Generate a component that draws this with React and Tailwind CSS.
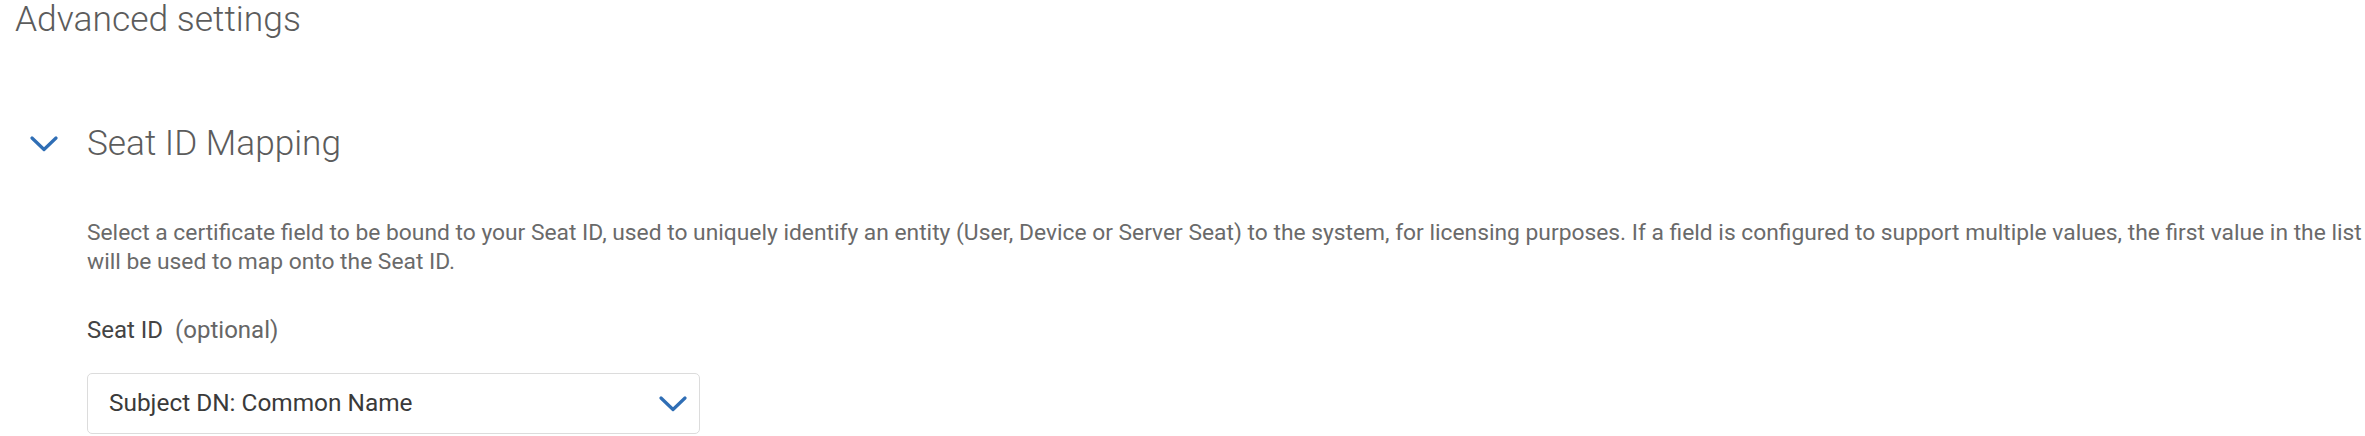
import React from 'react';

function Chevron({ className }) {
  return (
    <svg viewBox="0 0 28 16" className={className} fill="none">
      <polyline points="2,2 14,13.5 26,2" stroke="#2f6eb5" strokeWidth="3.2" strokeLinecap="round" strokeLinejoin="round" />
    </svg>
  );
}

export default function App() {
  return (
    <div className="min-h-screen bg-white font-['Roboto',sans-serif]">
      <h2 className="pl-[15px] pt-[2px] text-[35.4px] leading-[35px] font-light text-[#5c5c5c]">Advanced settings</h2>

      <section className="mt-[89px]">
        <button className="flex items-center">
          <Chevron className="ml-[30px] w-[28px] h-[16px]" />
          <span className="ml-[29px] text-[35.2px] leading-[35px] font-light text-[#5c5c5c]">Seat ID Mapping</span>
        </button>

        <div className="pl-[87px] mt-[57px]">
          <p className="text-[22.8px] leading-[29px] text-[#6a6a6a]">
            Select a certificate field to be bound to your Seat ID, used to uniquely identify an entity (User, Device or Server Seat) to the system, for licensing purposes. If a field is configured to support multiple values, the first value in the list
            <br />
            will be used to map onto the Seat ID.
          </p>

          <label className="block mt-[41px] text-[24px] leading-[27px] text-[#444]">
            Seat ID <span className="ml-[6px] text-[#666]">(optional)</span>
          </label>

          <div className="mt-[29px] w-[613px] h-[61px] border border-[#dcdcdc] rounded-[5px] flex items-center justify-between pl-[21px] pr-[12px]">
            <span className="text-[24.4px] text-[#3a3a3a]">Subject DN: Common Name</span>
            <Chevron className="w-[28px] h-[16px]" />
          </div>
        </div>
      </section>
    </div>
  );
}
